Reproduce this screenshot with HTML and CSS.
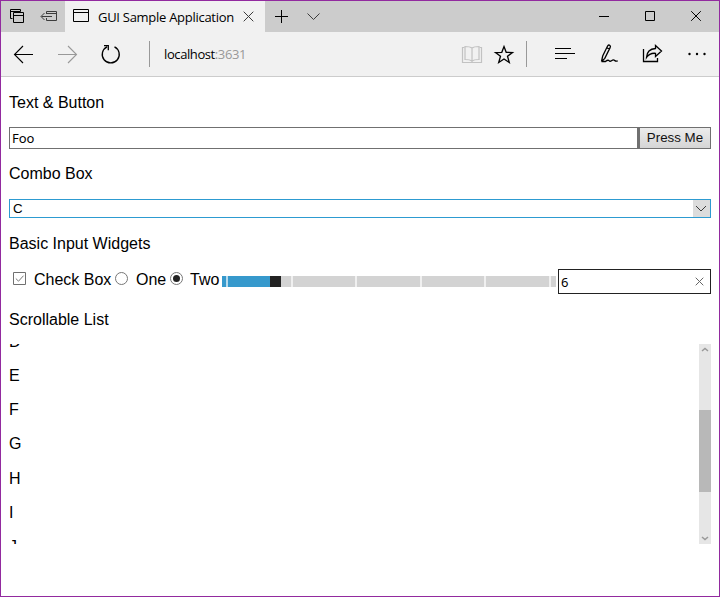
FILE: index.html
```
<!DOCTYPE html>
<html lang="en">
<head>
<meta charset="utf-8">
<title>GUI Sample Application</title>
<link rel="stylesheet" href="styles.css">
</head>
<body>
<div class="window">
  <header class="tabbar">
    <div class="tab-tools">
      <svg width="64" height="31" viewBox="1 1 64 31"><path d="M12.500 18.500h-2v-9h10v2M10.500 11.500h10M13.500 12.500h10v10h-10zM13.500 15.500h10"/><path class="soft" d="M46.500 14v-2.500h10v9h-10V18M46.500 13.500h10M41.500 16.500H52M44.500 13l-3.500 3.500 3.500 3.500"/></svg>
    </div>
    <div class="tab">
      <svg width="17" height="14"><path d="M.5.5h15v12H.5zM.5 3.500h15"/></svg>
      <span class="tab-title">GUI Sample Application</span>
      <svg class="tab-close" width="11" height="11"><path class="soft" d="M.7.7l9.600 9.600M10.300.7L.7 10.300"/></svg>
    </div>
    <div class="tab-add">
      <svg width="60" height="31" viewBox="265 1 60 31"><path d="M275 16.500h13M281.500 10v13"/><path class="soft" d="M307.500 13.500l6 6 6-6"/></svg>
    </div>
    <div class="controls">
      <svg width="138" height="31" viewBox="581 1 138 31"><path d="M599 16.500h10M645.500 11.500h9v9h-9zM691.200 11.200l9.600 9.600M700.800 11.200l-9.600 9.600"/></svg>
    </div>
  </header>
  <nav class="toolbar">
    <svg width="148" height="44" viewBox="1 32 148 44">
      <path class="arrow" d="M33 54.500H14.500M23 46l-8.500 8.500L23 63"/>
      <path class="arrow pale" d="M58 54.500h18.500M68 46l8.500 8.500L68 63"/>
      <path class="bold" d="M107 46.800a8.500 8.500 0 1 0 7.500 0M104 45.700h4.300v4.500"/>
    </svg>
    <div class="divider"></div>
    <div class="address">localhost<span>:3631</span></div>
    <svg width="68" height="44" viewBox="458 32 68 44">
      <g class="book"><path d="M464.500 47.500h-2v15h19v-15h-2"/><path d="M472 48q-2-1.500-7-1.500v13q5 0 7 1.500 2-1.500 7-1.500v-13q-5 0-7 1.500zM472 48v14"/></g>
      <path class="bold" d="M504 46.500l2.200 5.800 6.300.2-5 3.800 1.800 6.200-5.300-3.500-5.300 3.500 1.800-6.200-5-3.800 6.300-.2z"/>
    </svg>
    <div class="divider"></div>
    <svg width="192" height="44" viewBox="527 32 192 44">
      <path d="M555 48.500h16M555 53.500h20M555 58.500h12"/>
      <path class="bold" d="M601.500 61.500l1.200-5.500 5-10.200q1-1.300 2.200-.4 1 .8.2 2.200l-5.300 10.800-3.300 3.100M606.500 47.500l3 1.700M601.500 61.500h4q2.500-2 3.500-.8t2.500 0q2-1.500 3.200-.2t3 .2"/>
      <path class="bold" d="M643.500 49v12.500h14V58M655.500 45.500l6 5.500-6 5.500v-3.200q-6-.5-9 4.200.5-8.500 9-9z"/>
      <g class="dots"><circle cx="689.500" cy="54" r="1.200"/><circle cx="697" cy="54" r="1.200"/><circle cx="704.500" cy="54" r="1.200"/></g>
    </svg>
  </nav>
  <main>
    <h2>Text &amp; Button</h2>
    <div class="text-row"><div class="text-input">Foo</div><button>Press Me</button></div>
    <h2>Combo Box</h2>
    <div class="combo"><span>C</span><div class="combo-arrow"><svg width="12" height="8"><path class="soft" d="M1 1l5 5 5-5"/></svg></div></div>
    <h2>Basic Input Widgets</h2>
    <div class="widgets">
      <svg class="check" width="13" height="13"><path class="box" d="M.5.5h12v12H.5z"/><path class="tick" d="M2.800 6.500l2.700 2.700 5-5.500"/></svg>
      <span class="check-label">Check Box</span>
      <svg class="radio" width="13" height="13"><circle cx="6.500" cy="6.500" r="6"/></svg>
      <span class="one-label">One</span>
      <svg class="radio" width="13" height="13"><circle cx="6.500" cy="6.500" r="6"/><circle class="dot" cx="6.500" cy="6.500" r="3.500"/></svg>
      <span class="two-label">Two</span>
      <svg class="slider" width="334" height="11"><path class="rest" d="M0 0h334v11H0z"/><path class="fill" d="M0 0h48v11H0z"/><path class="ticks" d="M5 0v11M70 0v11M134 0v11M199 0v11M263 0v11M328 0v11"/><path class="thumb" d="M48 0h11v11H48z"/></svg>
      <div class="number"><span>6</span><svg width="9" height="9"><path d="M.7.7l7.600 7.600M8.300.7L.7 8.300"/></svg></div>
    </div>
    <h2>Scrollable List</h2>
    <div class="list">
      <div class="items"><p>D</p><p>E</p><p>F</p><p>G</p><p>H</p><p>I</p><p>J</p></div>
      <div class="scrollbar"><svg width="8" height="5"><path d="M1 4l3-2.500L7 4"/></svg><div class="scroll-thumb"></div><svg width="8" height="5"><path d="M1 1l3 2.500L7 1"/></svg></div>
    </div>
  </main>
</div>
</body>
</html>
```
FILE: styles.css
```
* { box-sizing: border-box; }
body { margin: 0; background: #fff; color: #000; font: 16px/18px "Liberation Sans", Arial, sans-serif; }
svg { display: block; flex: none; fill: none; stroke: #000; stroke-width: 1; }
.window { width: 720px; height: 597px; border: 1px solid #922a9f; overflow: hidden; }
.tabbar { display: flex; height: 31px; background: #ccc; }
.tab-tools { width: 64px; }
.soft { stroke: #3c3c3c; }
.tab { display: flex; align-items: center; width: 200px; padding-left: 8px; background: #f1f1f1; }
.tab > svg:first-child { margin-top: -1px; }
.tab-title { width: 138px; margin-left: 8px; font: 13px/18px "Open Sans", sans-serif; letter-spacing: -.28px; white-space: nowrap; }
.tab-close { margin-left: 7px; }
.controls { margin-left: auto; }
.toolbar { display: flex; align-items: center; height: 45px; background: #f1f1f1; border-bottom: 1px solid #ccc; }
.bold { stroke-width: 1.3; }
.arrow { stroke-width: 1.1; }
.pale { stroke: #999; }
.divider { width: 1px; height: 26px; background: #999; }
.address { flex: 1; padding-left: 14px; font: 13px/18px "Open Sans", sans-serif; letter-spacing: -.4px; }
.address span { color: #999; }
.book { stroke: #c2c2c2; stroke-width: 1.2; }
.dots { fill: #000; stroke: none; }
main { padding: 17px 8px 0; }
h2 { margin: 0; font-size: 16px; font-weight: 400; line-height: 18px; }
.text-row { display: flex; height: 22px; margin: 15px 0 16px; }
.text-input { flex: 1; border: 1px solid #707070; padding-left: 2px; font: 13px/20px "Noto Sans", sans-serif; }
button { width: 73px; border: 1px solid #707070; border-left-width: 2px; padding: 0; background: linear-gradient(#ececec, #d5d5d5); color: #111; font: 13.333px/20px "Liberation Sans", sans-serif; }
.combo { display: flex; justify-content: space-between; height: 19px; margin: 16px 0 17px; border: 1px solid #2d9bd1; padding-left: 3px; font-size: 13.333px; line-height: 18px; }
.combo-arrow { display: grid; place-items: center; width: 17px; background: #dcdcdc; }
.combo-arrow svg { margin-left: -1px; }
.widgets { display: flex; align-items: flex-start; height: 25px; margin: 16px 0 17px; line-height: 22px; }
.check { margin: 3px 8px 0 4px; }
.box { stroke: #707070; }
.tick { stroke: #777; }
.check-label { width: 81px; white-space: nowrap; }
.radio { margin-top: 3px; stroke: #777; }
.one-label { width: 34px; margin-left: 8px; }
.two-label { width: 32px; margin-left: 7px; }
.dot { fill: #222; stroke: none; }
.slider { margin: 7px 2px 0 0; }
.slider path { stroke: none; }
.slider .ticks { stroke: rgba(255,255,255,.65); stroke-width: 2; }
.rest { fill: #d3d3d3; }
.fill { fill: #3699cc; }
.thumb { fill: #222; }
.number { display: flex; flex: 1; align-items: center; justify-content: space-between; height: 25px; border: 1px solid #222; padding: 0 6px 0 2px; font: 13px/20px "Noto Sans", sans-serif; }
.number svg { stroke: #666; }
.list { display: flex; height: 200px; margin-top: 15px; overflow: hidden; }
.items { flex: 1; margin-top: -11.500px; }
.items p { margin: 0 0 16.250px; line-height: 18px; }
.scrollbar { display: flex; flex-direction: column; align-items: center; justify-content: space-between; width: 12px; height: 200px; padding: 3px 0; background: #e6e6e6; }
.scrollbar svg { stroke: #999; stroke-width: 1.5; }
.scroll-thumb { width: 12px; height: 82px; margin-top: 14px; background: #b8b8b8; }
```
